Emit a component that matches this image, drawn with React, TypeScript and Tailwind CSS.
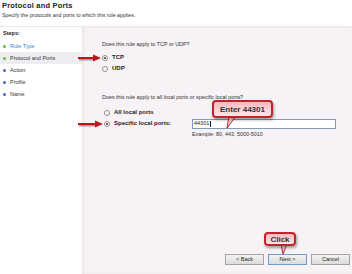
import React from "react";

const steps = [
  { label: "Rule Type", done: true, link: true },
  { label: "Protocol and Ports", done: true, current: true },
  { label: "Action" },
  { label: "Profile" },
  { label: "Name" },
];

function Radio({ checked }: { checked?: boolean }) {
  return (
    <span className="flex h-[6px] w-[6px] shrink-0 items-center justify-center rounded-full border border-[#8c8c8c] bg-white">
      {checked && <span className="h-[2px] w-[2px] rounded-full bg-[#333]" />}
    </span>
  );
}

function Option({ label, checked }: { label: string; checked?: boolean }) {
  return (
    <div className="flex h-[11px] items-center gap-[4px]">
      <Radio checked={checked} />
      <span className="text-[6px] font-bold leading-[7px] text-[#222]">{label}</span>
    </div>
  );
}

function Button({ label, focused }: { label: string; focused?: boolean }) {
  return (
    <div
      className={`flex h-[11px] w-[39px] items-center justify-center border bg-gradient-to-b from-[#f2f2f2] to-[#dcdcdc] text-[5.5px] leading-[7px] text-[#222] ${
        focused ? "border-[#6b9bd1]" : "border-[#a3a3a3]"
      }`}
    >
      {label}
    </div>
  );
}

// Red annotation bubble laid over the dialog.
function Callout({ text, className }: { text: string; className: string }) {
  return (
    <div
      className={`absolute flex items-center justify-center rounded-[4px] border-2 border-[#c3232b] bg-gradient-to-b from-[#f5b9bf] to-[#fde6e8] text-[8px] font-bold leading-[9px] text-[#333] shadow-[1px_2px_3px_rgba(0,0,0,0.35)] ${className}`}
    >
      {text}
    </div>
  );
}

export default function App() {
  return (
    <div
      className="relative h-[274px] w-[352px] overflow-hidden bg-white"
      style={{ fontFamily: '"Liberation Sans", Arial, sans-serif' }}
    >
      <div className="h-[27px] border-b border-[#e8e8e8] bg-white pl-[2px] pt-[1px]">
        <div className="text-[7.5px] font-bold leading-[9px] tracking-[0.2px] text-[#222]">
          Protocol and Ports
        </div>
        <div className="mt-[2px] text-[5.3px] leading-[7px] text-[#333]">
          Specify the protocols and ports to which this rule applies.
        </div>
      </div>

      <div className="flex h-[247px]">
        <div className="w-[82px] bg-white">
          <div className="flex h-[13px] items-center pl-[3px] text-[5.5px] font-bold leading-[7px] text-[#222]">
            Steps:
          </div>
          {steps.map((s) => (
            <div
              key={s.label}
              className={`flex h-[12px] items-center gap-[4px] pl-[3px] ${s.current ? "bg-[#eeeef2]" : ""}`}
            >
              <span
                className={`h-[3px] w-[3px] rounded-full ${s.done ? "bg-[#5cbf3a]" : "bg-[#4c62c8]"}`}
              />
              <span className={`text-[5.5px] leading-[7px] ${s.link ? "text-[#3b7fd6]" : "text-[#333]"}`}>
                {s.label}
              </span>
            </div>
          ))}
        </div>

        <div className="flex flex-1 flex-col bg-[#f6f2f6] pl-[20px] pr-[2px] pt-[14px] shadow-[inset_2px_0_3px_rgba(0,0,0,0.05)]">
          <div className="text-[5.4px] leading-[7px] text-[#333]">Does this rule apply to TCP or UDP?</div>
          <div className="mt-[4px]">
            <Option label="TCP" checked />
            <Option label="UDP" />
          </div>
          <div className="mt-[20px] text-[5.4px] leading-[7px] text-[#333]">
            Does this rule apply to all local ports or specific local ports?
          </div>
          <div className="mt-[6px] pl-[2px]">
            <Option label="All local ports" />
            <div className="flex h-[11px] items-center gap-[4px]">
              <Radio checked />
              <span className="w-[74px] text-[6px] font-bold leading-[7px] text-[#222]">Specific local ports:</span>
              <div className="flex h-[10px] w-[144px] items-center border border-[#7f9db9] bg-white pl-[1px] text-[5.5px] leading-[7px] text-[#222]">
                44301<span className="ml-[0.5px] h-[6px] w-px bg-[#222]" />
              </div>
            </div>
          </div>
          <div className="ml-[90px] mt-[2px] text-[5.4px] leading-[7px] text-[#333]">
            Example: 80, 443, 5000-5010
          </div>

          <div className="mb-[9px] mt-auto flex justify-end gap-[4px]">
            <Button label="< Back" />
            <Button label="Next >" focused />
            <Button label="Cancel" />
          </div>
        </div>
      </div>

      <svg className="pointer-events-none absolute left-0 top-0" width="352" height="274">
        <defs>
          <filter id="blur" x="-20%" y="-50%" width="140%" height="200%">
            <feGaussianBlur stdDeviation="0.6" />
          </filter>
        </defs>
        <g filter="url(#blur)" opacity="0.35">
          <path d="M79 59.5 H95" stroke="#000" strokeWidth="2" />
          <path d="M79 125.5 H97" stroke="#000" strokeWidth="2" />
        </g>
        <path d="M78 58 H94" stroke="#c4121b" strokeWidth="2" />
        <path d="M93 54.5 L101 58 L93 61.5 Z" fill="#c4121b" />
        <path d="M78 124 H96" stroke="#c4121b" strokeWidth="2" />
        <path d="M95 120.5 L103 124 L95 127.5 Z" fill="#c4121b" />

        <path d="M229 116 L236 116 L227 128 Z" fill="#f9d3d6" stroke="#c3232b" strokeWidth="1" />
        <path d="M281 244 L287 244 L283 254 Z" fill="#f9d3d6" stroke="#c3232b" strokeWidth="1" />
      </svg>

      <Callout text="Enter 44301" className="left-[212px] top-[100px] h-[18px] w-[61px]" />
      <Callout text="Click" className="left-[264px] top-[232px] h-[14px] w-[32px]" />
    </div>
  );
}
